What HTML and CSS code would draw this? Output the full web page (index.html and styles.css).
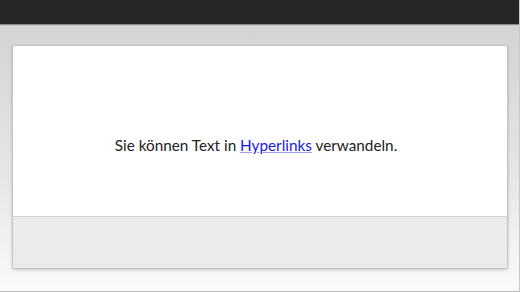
FILE: index.html
```html
<!DOCTYPE html>
<html lang="de">
<head>
    <meta charset="UTF-8">
    <meta name="viewport" content="width=device-width, initial-scale=1.0">
    <title>Hyperlinks</title>
    <link rel="stylesheet" href="styles.css">
</head>
<body>
    <div class="topbar"></div>
    <div class="stage">
        <div class="card">
            <div class="card-body">
                <p>Sie können Text in <a href="#">Hyperlinks</a> verwandeln.</p>
            </div>
            <div class="card-footer"></div>
        </div>
    </div>
</body>
</html>
```

FILE: styles.css
```css
html, body {
    height: 100%;
}
body {
    margin: 0;
    font-family: Lato, "Open Sans", sans-serif;
    color: #222;
    display: flex;
    flex-direction: column;
    box-sizing: border-box;
    border-right: 1px solid #c8c8c8;
    border-bottom: 1px solid #b8b8b8;
    background: linear-gradient(#d0d0d0, #e6e6e6 60%, #fafafa);
}
.topbar {
    height: 24px;
    background: #272727;
    box-shadow: 0 1px 1px rgba(0, 0, 0, 0.35);
}
.stage {
    flex: 1;
    padding: 21px 11px 22px 12px;
}
.card {
    border: 1px solid #c4c4c4;
    border-radius: 3px;
    box-shadow: 0 1px 3px rgba(0, 0, 0, 0.2);
    background: #fff;
    overflow: hidden;
}
.card-body {
    height: 171px;
    box-sizing: border-box;
    padding: 90px 8px 0 0;
    text-align: center;
    border-bottom: 1px solid #d4d4d4;
}
.card-body p {
    margin: 0;
    font-size: 15.3px;
}
.card-body a {
    color: #1a1ae6;
    text-decoration-color: #a0a0f5;
}
.card-footer {
    height: 51px;
    background: #ebebeb;
}
```
